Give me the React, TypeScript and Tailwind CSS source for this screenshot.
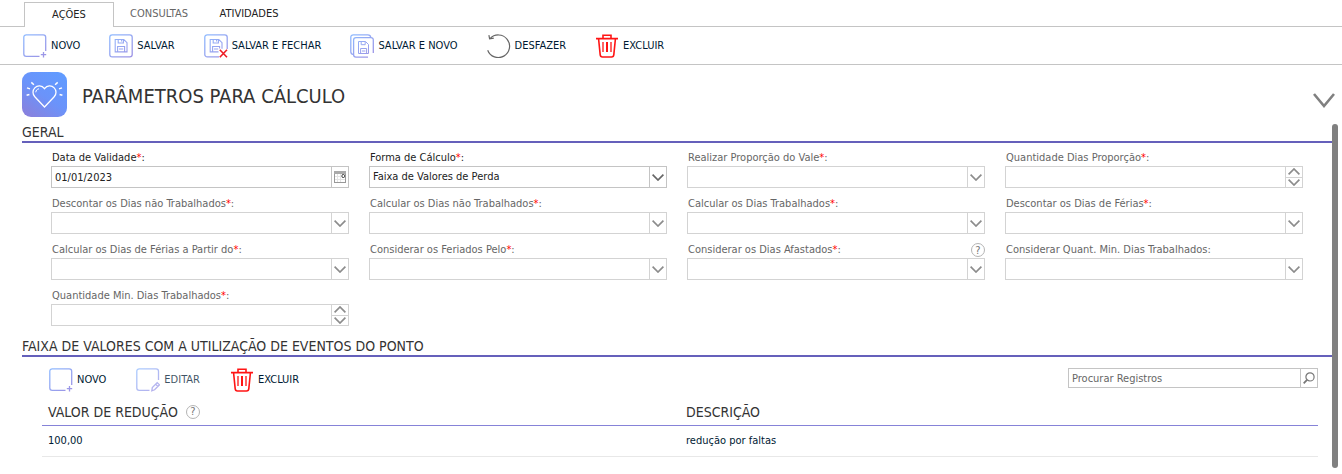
import React from "react";

interface IField {
	id: string;
	label: string;
	type: "date" | "select" | "number";
	value?: string;
	required?: boolean;
	help?: boolean;
}

const FIELDS: IField[] = [
	{ id: "validade", label: "Data de Validade", type: "date", value: "01/01/2023", required: true },
	{ id: "forma", label: "Forma de Cálculo", type: "select", value: "Faixa de Valores de Perda", required: true },
	{ id: "proporcao", label: "Realizar Proporção do Vale", type: "select", required: true },
	{ id: "qtdProporcao", label: "Quantidade Dias Proporção", type: "number", required: true },
	{ id: "descNaoTrab", label: "Descontar os Dias não Trabalhados", type: "select", required: true },
	{ id: "calcNaoTrab", label: "Calcular os Dias não Trabalhados", type: "select", required: true },
	{ id: "calcTrab", label: "Calcular os Dias Trabalhados", type: "select", required: true },
	{ id: "descFerias", label: "Descontar os Dias de Férias", type: "select", required: true },
	{ id: "calcFerias", label: "Calcular os Dias de Férias a Partir do", type: "select", required: true },
	{ id: "feriados", label: "Considerar os Feriados Pelo", type: "select", required: true },
	{ id: "afastados", label: "Considerar os Dias Afastados", type: "select", required: true, help: true },
	{ id: "quantMin", label: "Considerar Quant. Min. Dias Trabalhados", type: "select" },
	{ id: "qtdMin", label: "Quantidade Min. Dias Trabalhados", type: "number", required: true },
];

/* ICONS */

function IconGradients() {
	return (
		<svg className="absolute" width="0" height="0" aria-hidden="true">
			<defs>
				<linearGradient id="blue" gradientUnits="userSpaceOnUse" x1="2" y1="0" x2="22" y2="24">
					<stop offset="0" stopColor="#8fbaff" />
					<stop offset="1" stopColor="#9d92e4" />
				</linearGradient>
				<linearGradient id="badge" x1="0.8" y1="0" x2="0.1" y2="1">
					<stop offset="0" stopColor="#619bff" />
					<stop offset="0.5" stopColor="#6b93fa" />
					<stop offset="1" stopColor="#8a80dc" />
				</linearGradient>
			</defs>
		</svg>
	);
}

function Icon({ children }: { children: React.ReactNode }) {
	return (
		<svg className="shrink-0" width="24" height="24" viewBox="0 0 24 24" fill="none" stroke="url(#blue)" strokeWidth="1.3" aria-hidden="true">
			{children}
		</svg>
	);
}

function NewIcon() {
	return (
		<Icon>
			<path d="M16.5 22.3H3.2A2.4 2.4 0 0 1 .8 19.9V3.2A2.4 2.4 0 0 1 3.2.8H20.3A2.4 2.4 0 0 1 22.7 3.2V17" />
			<path d="M20.5 18v5.4M17.8 20.7h5.4" />
		</Icon>
	);
}

function SaveIcon() {
	return (
		<Icon>
			<rect x="0.8" y="0.8" width="22.4" height="22" rx="2.4" />
			<path d="M6.2 5.5h8.6l3.2 3.2v9.2h-11.8zM9.2 5.7v3.3h5.2v-3.3M12.6 6v1.6M8.6 17.8v-5.3h7v5.3M10 15h4.2" strokeWidth="1.1" />
		</Icon>
	);
}

function SaveCloseIcon() {
	return (
		<Icon>
			<path d="M15 22.8H3.2A2.4 2.4 0 0 1 .8 20.4V3.2A2.4 2.4 0 0 1 3.2.8H20.8A2.4 2.4 0 0 1 23.2 3.2V15" />
			<path d="M14.5 17.9H6.2V5.5h8.6L18 8.7v6M9.2 5.7v3.3h5.2v-3.3M12.6 6v1.6M8.6 17.8v-5.3h7v2M10 15h4.2" strokeWidth="1.1" />
			<path d="M15.8 15.8l7.2 7.4M23 15.8l-7.2 7.4" stroke="#ee1c25" strokeWidth="1.6" />
		</Icon>
	);
}

function SaveNewIcon() {
	return (
		<Icon>
			<path d="M3.6 20.6C1.8 20.4.8 19.4.8 17.8V3.2A2.4 2.4 0 0 1 3.2.8H17.8C19.4.8 20.6 1.8 20.7 3.4" />
			<path d="M18 23.2H6A2.4 2.4 0 0 1 3.6 20.8V6A2.4 2.4 0 0 1 6 3.6H21A2.3 2.3 0 0 1 23.3 6V19" />
			<path d="M8.5 7.5h7l3 3v9h-10zM11.2 7.7v3h4v-3M10.6 19.3v-4.8h6v4.8M12 17h3.4" strokeWidth="1" />
		</Icon>
	);
}

function EditIcon() {
	return (
		<Icon>
			<path d="M13.5 22.3H3.2A2.4 2.4 0 0 1 .8 19.9V3.2A2.4 2.4 0 0 1 3.2.8H20.1A2.4 2.4 0 0 1 22.5 3.2V12" />
			<path d="M15.8 22.8l.5-3.2 4.9-5 2.3 2.2-4.9 5zM19.6 16.2l2.3 2.2" />
		</Icon>
	);
}

function UndoIcon() {
	return (
		<svg className="shrink-0" width="24" height="24" viewBox="0 0 24 24" fill="none" stroke="#666" strokeWidth="1.2" aria-hidden="true">
			<path d="M.7 16.2A11.3 11.3 0 1 0 3 4.6" />
			<path d="M1.9 1.2l.7 3.7 4.2-.8" />
		</svg>
	);
}

function TrashIcon() {
	return (
		<svg className="shrink-0" width="24" height="24" viewBox="0 0 24 24" fill="none" stroke="#ff1414" strokeWidth="1.6" aria-hidden="true">
			<path d="M1 4.6h22M8 4.6V1.3h8V4.6M3.6 5l1.6 15.8a2.3 2.3 0 0 0 2.3 2.2h9a2.3 2.3 0 0 0 2.3-2.2L20.4 5" />
			<path d="M8 8v10M16 8v10" strokeWidth="1.3" />
			<path d="M12 8v10" strokeWidth="2" />
		</svg>
	);
}

function HeartBadge() {
	return (
		<svg className="shrink-0" width="45" height="45" viewBox="0 0 45 45" fill="none" stroke="#fff" aria-hidden="true">
			<rect width="45" height="45" rx="9" fill="url(#badge)" stroke="none" />
			<path d="M22.5 35L12.8 24.8a6.4 6.4 0 0 1 0-8.9c2.7-2.8 7-2.7 9.7.7 2.7-3.4 7-3.5 9.7-.7a6.4 6.4 0 0 1 0 8.9z" strokeWidth="1.3" />
			<path d="M13.8 20.3c.1-1.9 1.3-3.3 3.2-3.5" strokeWidth="1" />
			<path d="M9.3 10.4l2.6 2.3M5 15.9l3 1M4.6 23.3l2.8-.8M35.7 10.4l-2.6 2.3M40 15.9l-3 1M40.4 23.3l-2.8-.8" strokeWidth="1.5" />
		</svg>
	);
}

function Chevron({ up = false }: { up?: boolean }) {
	return (
		<svg width="12" height="7" viewBox="0 0 12 7" fill="none" stroke="currentColor" strokeWidth="1.7" aria-hidden="true">
			<path d={up ? "M.6 6.3L6 1l5.4 5.3" : "M.6.7L6 6 11.4.7"} />
		</svg>
	);
}

function CalendarIcon() {
	return (
		<svg width="12" height="12" viewBox="0 0 12 12" fill="none" aria-hidden="true">
			<path d="M3.5 3v8M6.5 3v8M1 5.5h10M1 8.5h10" stroke="#e4e4e4" />
			<rect x="0.5" y="0.5" width="11" height="11" stroke="#999" />
			<path d="M0 1.5h12" stroke="#aaa" strokeWidth="3" />
			<rect x="8" y="3.5" width="2.5" height="3" rx="1" fill="#fff" stroke="#333" />
		</svg>
	);
}

function SearchIcon() {
	return (
		<svg width="12" height="12" viewBox="0 0 12 12" fill="none" stroke="#777" aria-hidden="true">
			<circle cx="7" cy="4.9" r="4.1" strokeWidth="1.2" />
			<path d="M4 7.9L.7 11.3" strokeWidth="1.8" />
		</svg>
	);
}

function Help() {
	return (
		<button type="button" aria-label="Ajuda" className="flex size-[14px] shrink-0 items-center justify-center rounded-full border border-[#b4b4b4] text-[11px] leading-none text-[#777]">
			?
		</button>
	);
}

/* CONTROLS */

interface IActionProps {
	icon: React.ReactNode;
	label: string;
	disabled?: boolean;
}

function Action({ icon, label, disabled = false }: IActionProps) {
	return (
		<button type="button" disabled={disabled} className="flex items-center gap-1 whitespace-nowrap text-[#001a33] disabled:opacity-75">
			{icon}
			{label}
		</button>
	);
}

function Field({ id, label, type, value, required, help }: IField) {
	const disabled = !value;

	return (
		<div className={disabled ? "text-[#666]" : "text-[#222]"}>
			<div className="flex h-4 items-center justify-between pl-px">
				<label htmlFor={id} className="whitespace-nowrap">
					{label}
					{required && <span className="text-[#ff0000]">*</span>}:
				</label>
				{help && <Help />}
			</div>

			{type === "select" ? (
				<div className={`relative h-[22px] border ${disabled ? "border-[#d3d3d3]" : "border-[#c4c4c4]"}`}>
					<select id={id} disabled={disabled} className="block h-full w-full appearance-none bg-white pr-5 pl-[3px] opacity-100">
						<option>{value}</option>
					</select>
					<span className={`pointer-events-none absolute inset-y-0 right-0 flex w-[17px] items-center justify-center border-l border-inherit ${disabled ? "text-[#8c8c8c]" : "text-[#666]"}`}>
						<Chevron />
					</span>
				</div>
			) : (
				<div className={`flex h-[22px] border ${disabled ? "border-[#d3d3d3]" : "border-[#c4c4c4]"}`}>
					<input id={id} type="text" disabled={disabled} defaultValue={value} className="h-full min-w-0 flex-1 bg-white px-[3px] outline-none" />
					{type === "date" ? (
						<button type="button" aria-label="Abrir calendário" className="flex w-[17px] items-center justify-center border-l border-inherit">
							<CalendarIcon />
						</button>
					) : (
						<div className="flex w-[17px] flex-col border-l border-inherit text-[#8c8c8c]">
							<button type="button" disabled aria-label="Aumentar" className="flex flex-1 items-center justify-center border-b border-inherit">
								<Chevron up />
							</button>
							<button type="button" disabled aria-label="Diminuir" className="flex flex-1 items-center justify-center">
								<Chevron />
							</button>
						</div>
					)}
				</div>
			)}
		</div>
	);
}

function SectionTitle({ children }: { children: React.ReactNode }) {
	return (
		<h2 className="ml-[22px] border-b-2 border-[#6560bb] text-[14px] leading-[17px] text-[#333]">
			{children}
		</h2>
	);
}

export default function App() {
	return (
		<div className="bg-white font-['DejaVu_Sans_Condensed','DejaVu_Sans',sans-serif] text-[11px] leading-4 text-[#222]">
			<IconGradients />

			{/* TABS */}
			<nav className="flex h-[27px] items-end border-b border-[#c4c4c4] pl-6">
				<button type="button" className="-mb-px h-[25px] w-[90px] border border-b-0 border-[#c4c4c4] bg-white">AÇÕES</button>
				<button type="button" className="h-6 w-[90px] text-[#666]">CONSULTAS</button>
				<button type="button" className="h-6 w-[90px]">ATIVIDADES</button>
			</nav>

			{/* TOOLBAR */}
			<div className="flex h-[38px] items-center gap-[29px] border-b border-[#c4c4c4] pl-[23px]">
				<Action icon={<NewIcon />} label="NOVO" />
				<Action icon={<SaveIcon />} label="SALVAR" />
				<Action icon={<SaveCloseIcon />} label="SALVAR E FECHAR" />
				<Action icon={<SaveNewIcon />} label="SALVAR E NOVO" />
				<Action icon={<UndoIcon />} label="DESFAZER" />
				<Action icon={<TrashIcon />} label="EXCLUIR" />
			</div>

			{/* HEADER */}
			<header className="flex h-[59px] items-start pt-[7px] pr-[7px] pl-[22px]">
				<HeartBadge />
				<h1 className="ml-[15px] flex-1 text-[20px] leading-[48px] text-[#333]">PARÂMETROS PARA CÁLCULO</h1>
				<button type="button" aria-label="Recolher" className="pt-[21px]">
					<svg width="22" height="15" viewBox="0 0 22 15" fill="none" stroke="#808080" strokeWidth="2.6" aria-hidden="true">
						<path d="M1 1l10 12L21 1" />
					</svg>
				</button>
			</header>

			<div className="flex pr-1">
				<main className="min-w-0 flex-1">
					<SectionTitle>GERAL</SectionTitle>
					<form className="grid grid-cols-4 gap-x-5 gap-y-2 pt-[7px] pr-[29px] pb-3 pl-[51px]">
						{FIELDS.map((field) => (
							<Field key={field.id} {...field} />
						))}
					</form>

					<SectionTitle>FAIXA DE VALORES COM A UTILIZAÇÃO DE EVENTOS DO PONTO</SectionTitle>
					<div className="pt-[11px] pr-[14px] pb-[11px] pl-[42px]">
						<div className="flex items-start justify-between">
							<div className="flex items-center gap-[30px] pl-[7px]">
								<Action icon={<NewIcon />} label="NOVO" />
								<Action icon={<EditIcon />} label="EDITAR" disabled />
								<Action icon={<TrashIcon />} label="EXCLUIR" />
							</div>
							<div className="flex h-5 w-[250px] border border-[#c4c4c4]">
								<input type="text" aria-label="Procurar Registros" placeholder="Procurar Registros" className="h-full min-w-0 flex-1 px-[3px] outline-none placeholder:text-[#666]" />
								<button type="button" aria-label="Procurar" className="flex w-[17px] items-center justify-center border-l border-[#c4c4c4]">
									<SearchIcon />
								</button>
							</div>
						</div>

						<table className="mt-[7px] w-full table-fixed border-collapse text-left">
							<thead>
								<tr className="h-[26px] border-b border-[#8683d8] text-[14px] text-[#333]">
									<th className="px-1.5 font-normal">
										<span className="flex items-center gap-2">
											VALOR DE REDUÇÃO
											<Help />
										</span>
									</th>
									<th className="px-1.5 font-normal">DESCRIÇÃO</th>
								</tr>
							</thead>
							<tbody>
								<tr className="h-[31px] border-b border-[#e8e8e8] text-[#001a33]">
									<td className="px-1.5">100,00</td>
									<td className="px-1.5">redução por faltas</td>
								</tr>
							</tbody>
						</table>
					</div>
				</main>

				{/* SCROLLBAR */}
				<div className="w-1.5 rounded-full bg-[#808080]" />
			</div>
		</div>
	);
}
